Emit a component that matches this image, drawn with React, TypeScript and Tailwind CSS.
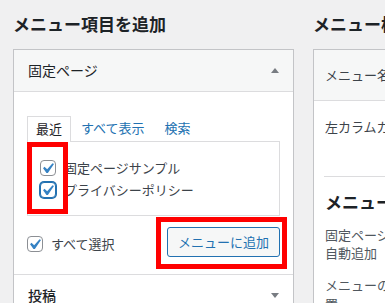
import React from "react";

const Check = ({ focused = false }: { focused?: boolean }) => {
  return (
    <span
      className={
        "relative inline-block w-4 h-4 shrink-0 rounded-[4px] bg-white " +
        (focused
          ? "border border-[#2271b1] shadow-[0_0_0_1px_#2271b1]"
          : "border border-[#8c8f94]")
      }
    >
      <svg
        viewBox="0 0 20 20"
        className="absolute -left-[4px] -top-[3px] w-[21px] h-[21px]"
      >
        <path
          d="M14.83 4.89l1.34.94-5.81 8.38H9.02L5.78 9.67l1.34-1.25 2.57 2.4z"
          fill="#3582c4"
        />
      </svg>
    </span>
  );
};

const Arrow = ({ up }: { up?: boolean }) => (
  <svg viewBox="0 0 8 5" className="w-2 h-[5px]">
    <path d={up ? "M4 0L8 5H0z" : "M0 0h8L4 5z"} fill="#787c82" />
  </svg>
);

const App = () => {
  return (
    <div className="relative w-[385px] h-[303px] overflow-hidden bg-[#f0f0f1] font-['Noto_Sans_CJK_JP',sans-serif] text-[#1d2327]">
      <div className="flex pl-[13px]">
        {/* left column */}
        <div className="w-[281px] shrink-0 pt-[14px]">
          <h2 className="text-[17px] leading-[20px] font-bold mb-[15px] whitespace-nowrap">
            メニュー項目を追加
          </h2>
          <div className="border border-[#c3c4c7] bg-white">
            <div className="h-[42px] bg-[#f6f7f7] border-b border-[#dcdcde] flex items-center justify-between pl-[14px] pr-[14px]">
              <span className="text-[14px]">固定ページ</span>
              <Arrow up />
            </div>
            <div className="px-[13px] pt-[24px]">
              <div className="flex items-end text-[13px] leading-[24px]">
                <div className="relative z-10 -mb-px h-[26px] px-2 border border-b-0 border-[#dcdcde] bg-white text-[#1d2327]">
                  最近
                </div>
                <div className="px-[10px] h-[25px] text-[#2271b1]">すべて表示</div>
                <div className="px-[10px] h-[25px] text-[#2271b1]">検索</div>
              </div>
              <div className="border border-[#dcdcde] pl-[12px] pt-[15px] pb-[14px] text-[13px] text-[#3c434a]">
                <div className="flex items-center gap-2 h-[22px]">
                  <Check />
                  <span>固定ページサンプル</span>
                </div>
                <div className="flex items-center gap-2 h-[22px]">
                  <Check focused />
                  <span>プライバシーポリシー</span>
                </div>
              </div>
              <div className="flex items-center justify-between pt-[11px] pb-[17px]">
                <label className="flex items-center gap-2 text-[13px] text-[#3c434a] mt-[4px]">
                  <Check />
                  <span>すべて選択</span>
                </label>
                <button className="h-[30px] px-[10px] rounded-[3px] border border-[#2271b1] bg-[#f6f7f7] text-[#2271b1] text-[13px] leading-[28px]">
                  メニューに追加
                </button>
              </div>
            </div>
            <div className="h-[42px] border-t border-[#dcdcde] bg-white flex items-center justify-between pl-[14px] pr-[14px]">
              <span className="text-[14px] font-medium">投稿</span>
              <Arrow />
            </div>
          </div>
        </div>

        {/* right column */}
        <div className="ml-[19px] w-[300px] shrink-0 pt-[14px]">
          <h2 className="text-[17px] leading-[20px] font-bold mb-[15px] whitespace-nowrap">
            メニュー構造
          </h2>
          <div className="border border-[#c3c4c7] bg-white">
            <div className="h-[51px] bg-[#f6f7f7] border-b border-[#dcdcde] flex items-center pl-[11px] text-[13px] text-[#3c434a] whitespace-nowrap">
              メニュー名
            </div>
            <div className="pl-[10px]">
              <div className="h-[50px] flex items-center pl-px text-[13px] text-[#3c434a] whitespace-nowrap pt-[2px]">
                左カラムカテゴリー
              </div>
              <div className="mt-[25px] border-t border-[#dcdcde]" />
              <h3 className="pl-px mt-[15px] text-[17px] leading-[20px] font-bold whitespace-nowrap">
                メニュー設定
              </h3>
              <div className="pl-px mt-[14px] text-[13px] leading-[18px] text-[#50575e] w-[79px]">
                固定ページを自動追加
              </div>
              <div className="pl-px mt-[13px] text-[13px] leading-[19px] text-[#50575e] w-[79px]">
                メニューの位置
              </div>
            </div>
          </div>
        </div>
      </div>

      {/* red highlight boxes */}
      <div className="absolute left-[27px] top-[142px] w-[41px] h-[72px] border-[5px] border-[#ff0000]" />
      <div className="absolute left-[156px] top-[217px] w-[131px] h-[52px] border-[5px] border-[#ff0000]" />
    </div>
  );
};

export default App;
